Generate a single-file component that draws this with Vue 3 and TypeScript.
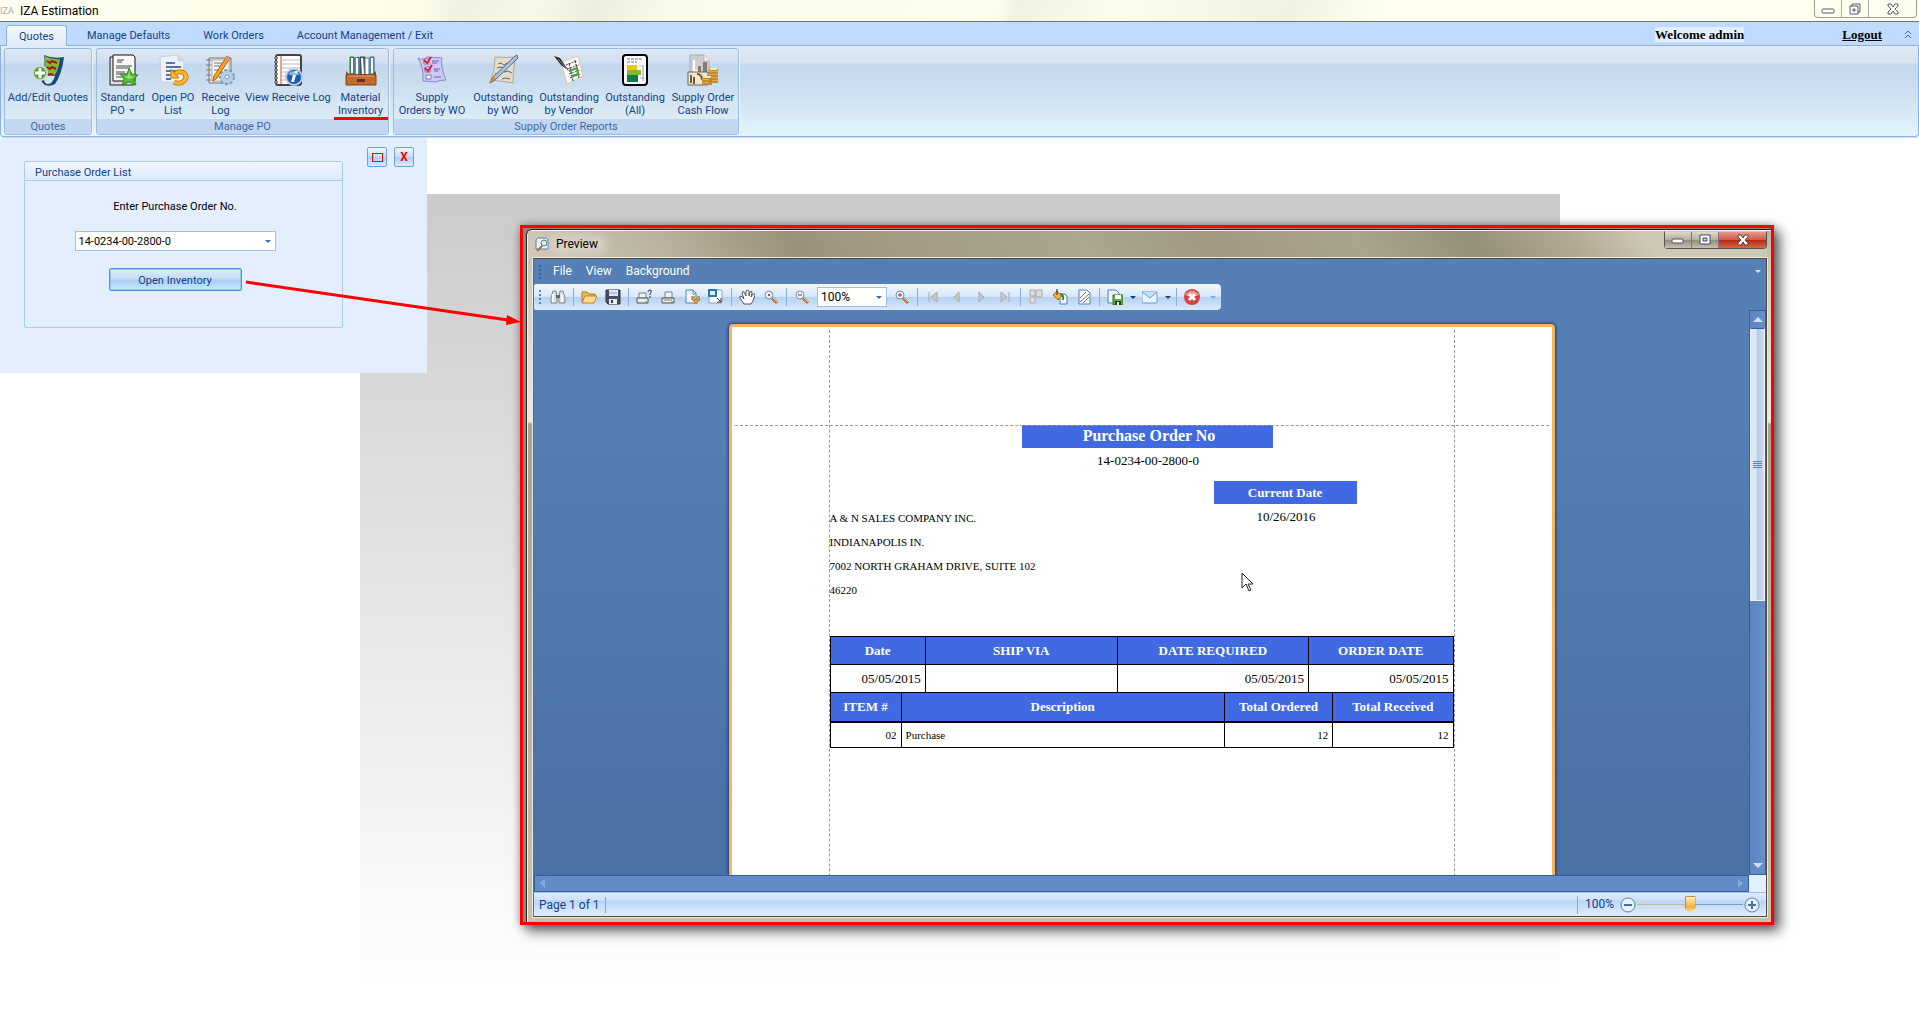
<script setup lang="ts">
import { ref } from 'vue'

interface RibbonItem {
  label: string[]
  icon: string
  width: number
  menu?: boolean
  marked?: boolean
}

interface RibbonGroup {
  title: string
  items: RibbonItem[]
}

interface Tool {
  kind: 'button' | 'sep' | 'zoom' | 'drop'
  name?: string
}

const ribbonIcons: Record<string, string> = {
  quotes: `<path d="M12 1q9 4 20 2-2 17-9 27-5 3-10 1-3-2-4-5 5-12 3-25z" fill="#1d4778"/>
    <path d="M13 2q7 4 15 3-1 9-5 16l-11-2q2-9 1-17z" fill="#84b82c"/><path d="M12 20l11 2q-1 4-4 7-3 2-6 0-2-4-1-9z" fill="#cfe6f6"/>
    <path d="M15 7l3 2 2-2 5 2M15 13l3 2 2-2 4 2M15 20l2 1 2-1 2 1" stroke="#a3142a" stroke-width="2" fill="none"/>
    <circle cx="8" cy="19" r="7" fill="#4f9e35" stroke="#cfd8cf" stroke-width="2"/><path d="M8 14v10M3 19h10" stroke="#fff" stroke-width="3"/>`,
  standard: `<path d="M3 3h24v28H3z" fill="#ddd" stroke="#222"/><path d="M6 1h20l2 2v24H6z" fill="#f8f8f8" stroke="#111" stroke-width="1"/>
    <path d="M10 6h7M10 8h5M9 12h16M9 14h14M9 18h9M9 20h12M9 23h8" stroke="#444"/>
    <path d="M22 14l3 6 6 1-4 4 2 6-7-3-7 3 2-6-4-5 7 0z" fill="#56b83b" stroke="#3a8b27"/><path d="M22 17l1 5 5 1-6 2-5-2 4-1z" fill="#92e36a"/>`,
  open: `<path d="M3 3q9-1 17-2l7 6-1 20q-11 2-22 1z" fill="#eef2f8" stroke="#c4cede"/><path d="M20 1l1 6 6 1z" fill="#c8d3e4"/>
    <path d="M9 9h9M9 13h15M9 17h15M9 21h5M9 25h5" stroke="#4d73b8" stroke-width="2"/>
    <path d="M18 20q4-4 9-1 4 4 0 8-5 4-10 1" fill="none" stroke="#cd7b10" stroke-width="5"/><path d="M18 20q4-4 9-1 4 4 0 8-5 4-10 1" fill="none" stroke="#fbb62a" stroke-width="3"/>
    <path d="M14 15v9h8z" fill="#fbb62a" stroke="#cd7b10"/>`,
  receive: `<path d="M4 4h22v25H4z" fill="#e1e1df" stroke="#777"/><path d="M7 6h17v21H7z" fill="#f7f7f4" stroke="#aaa"/>
    <path d="M1 6h5M1 11h5M1 16h5M1 21h5M1 26h5M9 9h8M9 12h10M9 16h7" stroke="#777"/>
    <circle cx="22" cy="23" r="7" fill="#b9cee5" stroke="#7999bd" stroke-width="2" stroke-dasharray="3 2"/><circle cx="22" cy="23" r="2" fill="#edf5fc" stroke="#7999bd"/>
    <path d="M22 2l3 2-13 20-4 3 1-5z" fill="#f7a51e" stroke="#a85c0b"/><path d="M22 2l3 2-2 3-3-2z" fill="#e99191"/>`,
  view: `<rect x="4" y="1" width="25" height="30" rx="2" fill="#fff" stroke="#444" stroke-width="2"/><path d="M9 6h19M9 10h19M9 14h19M9 18h19M9 22h12M9 26h9" stroke="#bbb"/>
    <path d="M9 2v28" stroke="#e7a386" stroke-width="2"/><path d="M2 4h4M2 8h4M2 12h4M2 16h4M2 20h4M2 24h4M2 28h4" stroke="#888" stroke-width="2"/>
    <circle cx="22" cy="23" r="8" fill="#175eb6" stroke="#b8c9df" stroke-width="2"/><path d="M16 20q6-6 12 0-6 3-12 0z" fill="#83baf0"/><path d="M23 17h3l-1 2h-3zM21 21h3l-2 7h-3z" fill="#fff"/>`,
  material: `<path d="M5 3h4v18H5z" fill="#41a25d" stroke="#28703b"/><path d="M10 4l4-1v19h-4z" fill="#7ab5e2" stroke="#406784"/>
    <path d="M15 3h5v19h-5z" fill="#596066" stroke="#3e454a"/><path d="M20 4h4v18h-4z" fill="#e9f1f5" stroke="#667f91"/><path d="M25 3h4v19h-4z" fill="#6ca8cd" stroke="#395f7c"/>
    <path d="M7 4v15M12 4v16M17 4l1 16M22 5v15M27 4v15" stroke="#fff" stroke-width="2"/>
    <path d="M1 17l3 3h24l3-3v5H1z" fill="#8f491c"/><path d="M1 21h30v10H1z" fill="#bf6a2e" stroke="#87451b"/><path d="M3 22h26" stroke="#eba36c"/><path d="M12 25h8v3h-8z" fill="#702c14"/>`,
  supply: `<path d="M2 4q5 3 9-1l15 1q-2 8 4 22-7 0-10 2L7 27Q8 14 2 4z" fill="#cdc9f6" stroke="#8f87cc"/>
    <path d="M8 5h5v5H8zM9 13h5v5H9zM10 21h5v4h-5z" fill="#fff" stroke="#77a"/><path d="M8 6l3 3 4-6M9 14l3 3 4-6" stroke="#e41c2a" stroke-width="2" fill="none"/>
    <path d="M16 7h7M16 9h5M18 15h6M18 17h4M18 23h7" stroke="#6861aa"/>`,
  outstanding: `<path d="M8 3q12 1 21 0-3 10-3 26-12-2-22-3Q8 15 8 3z" fill="#e4ddcd" stroke="#b3a994"/>
    <path d="M11 10l3-1 3 2 3-2M10 14l4-1 3 1M17 18l4-1 4 2M8 20l4-1M15 25l3-1 5 1" stroke="#6a6157" fill="none"/>
    <path d="M27 3l3-2 1 3L8 26l-5 3 2-5z" fill="#a9c3dd" stroke="#4b6a8c"/><path d="M6 22l3 3-7 4z" fill="#db8d23"/>`,
  vendor: `<path d="M8 8l17-6 5 20-16 8z" fill="#faf9f5" stroke="#cfcabf"/><path d="M13 11l11-4M14 15l12-4M16 20l11-4M17 24l11-4" stroke="#555" stroke-dasharray="2 1"/>
    <path d="M16 9l4 18M22 6l4 18" stroke="#333" stroke-dasharray="3 1"/><path d="M16 17l8-3 1 6-6 2" stroke="#49a13b" stroke-width="2" fill="none"/>
    <path d="M1 2l6 2 9 13-8-6z" fill="#222"/><path d="M5 5l9 10" stroke="#999"/>`,
  all: `<rect x="4" y="1" width="24" height="30" rx="3" fill="#fff" stroke="#000" stroke-width="2"/><path d="M8 5h16M8 8h10" stroke="#777" stroke-dasharray="3 1"/>
    <path d="M8 11h10v5H8z" fill="#e9c70d"/><path d="M8 16h14v5H8z" fill="#80bd33"/><path d="M8 21h11v7H8z" fill="#117a3c"/><path d="M24 11v16" stroke="#999"/><path d="M20 12h5M21 24h5" stroke="#bbb"/>`,
  cash: `<path d="M3 1h14l5 5v19H3z" fill="#cecece" stroke="#aaa"/><path d="M17 1v6h6" fill="#f2f2f2" stroke="#bbb"/><path d="M7 6v11h5" stroke="#fff" stroke-width="2" fill="none"/><path d="M11 12h3v6h-3zM16 8h4v10h-4z" fill="#897970"/>
    <path d="M1 18h20v13H1z" fill="#eee6cd" stroke="#6c6457"/><path d="M4 21v8M7 23v7M10 20q5 0 5 6" stroke="#6f5a3b" stroke-width="2" fill="none"/>
    <path d="M15 23h10v8H15zM22 15h9v14h-9z" fill="#e4a94c"/><path d="M15 24h10M15 27h10M15 30h10M22 16h9M22 19h9M22 22h9M22 25h9M22 28h9" stroke="#a76a19"/><path d="M23 15h7M16 23h8" stroke="#ffe9a5" stroke-width="2"/>`,
}

const lens = (mark: string) =>
  `<path d="M9 9l5 5" stroke="#b07a32" stroke-width="3"/><path d="M10 9l4 4" stroke="#f3c880"/><circle cx="6" cy="6" r="4" fill="#e4f1fc" stroke="#7b90ad" stroke-width="1"/>${mark}`
const printer = `<path d="M5 3h7v6H5z" fill="#eef6ff" stroke="#69829e"/><path d="M2 9h12v5H2z" fill="#e9e9e9" stroke="#555"/><path d="M4 11h8" stroke="#888"/><path d="M11 13h2" stroke="#48a838"/>`

const toolIcons: Record<string, string> = {
  find: `<path d="M3 2h3l1 5v7H1V9zM10 2h3l2 7v5H9V7z" fill="#d9dcdf" stroke="#858b92"/><path d="M6 6h4v3H6z" fill="#5e6770"/><path d="M3 5v8M12 5v8" stroke="#fff" stroke-width="2"/>`,
  open: `<path d="M1 13V3h5l2 2h6v4" fill="#edb65c" stroke="#b87324"/><path d="M1 14l3-7h12l-3 7z" fill="#ffdc93" stroke="#c57f2b"/>`,
  save: `<path d="M1 1h14v14H3l-2-2z" fill="#435064" stroke="#283343"/><path d="M4 1h9v6H4z" fill="#dce5ef"/><path d="M4 10h8v5H4z" fill="#eceff2"/><path d="M6 11h2v3H6z" fill="#344153"/><path d="M4 4h8" stroke="#91a2b6"/>`,
  printAsk: `<path d="M3 4h7v5H3z" fill="#eef6ff" stroke="#69829e"/><path d="M1 9h11v5H1z" fill="#e9e9e9" stroke="#555"/><path d="M9 13h2" stroke="#48a838"/><path d="M12 3q0-2 2-2t1 2-1 2v1M14 7v2" fill="none" stroke="#333"/>`,
  print: printer,
  setup: `<path d="M2 1h7l3 3v10H2z" fill="#edf6ff" stroke="#4f82bb"/><path d="M9 1v4h3" fill="none" stroke="#4f82bb"/><path d="M9 7v3l3 2 3-2V7M12 11v4" stroke="#a66510" stroke-width="3" fill="none"/><path d="M9 7v3l3 2 3-2V7M12 11v4" stroke="#ffc65b" fill="none"/>`,
  scale: `<path d="M6 1h8v13H1V7" fill="#fafdff" stroke="#84a5c8"/><path d="M1 1h7v6H1z" fill="#dceeff" stroke="#2d75b8" stroke-width="2"/><path d="M9 9l4 4M13 9v4H9" stroke="#333" fill="none"/>`,
  hand: `<path d="M5 15l-4-6q-1-2 1-2l3 3-2-6q0-2 2-1l2 4V2q2-2 3 0v5l1-4q2-2 2 1l-1 4 2-3q2-1 2 1l-2 6-2 3z" fill="#fff" stroke="#555"/>`,
  magnify: lens('<path d="M5 5h2v2H5z" fill="#c9432e"/>'),
  out: lens('<path d="M4 6h4" stroke="#bd302a"/>'),
  in: lens('<path d="M4 6h4M6 4v4" stroke="#bd302a"/>'),
  first: `<path d="M4 3v10M12 3v10L6 8z" fill="#c8c8c8" stroke="#aaa"/>`,
  prev: `<path d="M10 3v10L5 8z" fill="#c8c8c8" stroke="#aaa"/>`,
  next: `<path d="M6 3v10l5-5z" fill="#c8c8c8" stroke="#aaa"/>`,
  last: `<path d="M12 3v10M4 3v10l6-5z" fill="#c8c8c8" stroke="#aaa"/>`,
  multi: `<path d="M2 1h5v6H2zM8 1h6v7H8zM2 8h5v6H2z" fill="#ddd" stroke="#aaa"/>`,
  fill: `<path d="M9 5h4l2 2v8H8V7z" fill="#eaf5ff" stroke="#4a7ebb"/><path d="M1 6l4-4 5 5-4 4z" fill="#f4b03c" stroke="#a76a13"/><path d="M5 0v6" stroke="#222"/><path d="M8 5q4 0 3 6" stroke="#3b8a35" stroke-width="2" fill="none"/>`,
  mark: `<path d="M3 1h8l3 3v11H3z" fill="#fafafa" stroke="#4e83bc"/><path d="M4 9l6-6M4 13l9-8M7 14l6-6" stroke="#777" stroke-width="1"/>`,
  export: `<path d="M1 1h8l3 3v10H1z" fill="#edf6ff" stroke="#4f82bb"/><path d="M6 6h10v10H6z" fill="#62b532" stroke="#2f701f"/><path d="M8 6h6v4H8z" fill="#fff"/><path d="M8 12h6v4H8z" fill="#333"/><path d="M10 13h2v3h-2z" fill="#eee"/>`,
  mail: `<path d="M0 3h15v11H0z" fill="#e8f4ff" stroke="#6b9dcd"/><path d="M0 3l8 6 7-6" fill="#c3dff7" stroke="#6b9dcd"/>`,
  close: `<circle cx="8" cy="8" r="8" fill="#d64240"/><path d="M1 6q7-9 14 0-7 3-14 0z" fill="#ee9490"/><path d="M5 5l6 6M11 5l-6 6" stroke="#fff" stroke-width="3"/>`,
}

const tabs = ['Quotes', 'Manage Defaults', 'Work Orders', 'Account Management / Exit']
const activeTab = ref('Quotes')

const groups: RibbonGroup[] = [
  { title: 'Quotes', items: [{ label: ['Add/Edit Quotes'], icon: 'quotes', width: 86 }] },
  {
    title: 'Manage PO',
    items: [
      { label: ['Standard', 'PO'], icon: 'standard', width: 51, menu: true },
      { label: ['Open PO', 'List'], icon: 'open', width: 50 },
      { label: ['Receive', 'Log'], icon: 'receive', width: 45 },
      { label: ['View Receive Log'], icon: 'view', width: 90 },
      { label: ['Material', 'Inventory'], icon: 'material', width: 55, marked: true },
    ],
  },
  {
    title: 'Supply Order Reports',
    items: [
      { label: ['Supply', 'Orders by WO'], icon: 'supply', width: 76 },
      { label: ['Outstanding', 'by WO'], icon: 'outstanding', width: 66 },
      { label: ['Outstanding', 'by Vendor'], icon: 'vendor', width: 66 },
      { label: ['Outstanding', '(All)'], icon: 'all', width: 66 },
      { label: ['Supply Order', 'Cash Flow'], icon: 'cash', width: 70 },
    ],
  },
]

const b = (name: string): Tool => ({ kind: 'button', name })
const sep: Tool = { kind: 'sep' }
const drop: Tool = { kind: 'drop' }
const tools: Tool[] = [
  b('find'), sep, b('open'), b('save'), sep, b('printAsk'), b('print'), b('setup'), b('scale'), sep,
  b('hand'), b('magnify'), sep, b('out'), { kind: 'zoom' }, b('in'), sep,
  b('first'), b('prev'), b('next'), b('last'), sep, b('multi'), b('fill'), b('mark'), sep,
  b('export'), drop, b('mail'), drop, sep, b('close'),
]

const orderNo = ref('14-0234-00-2800-0')
const zoom = ref(100)
const address = ['A & N SALES COMPANY INC.', 'INDIANAPOLIS IN.', '7002 NORTH GRAHAM DRIVE, SUITE 102', '46220']
</script>

<template>
  <div class="app">
    <header class="titlebar">
      <span class="logo">IZA</span>
      <span class="app-title">IZA Estimation</span>
      <div class="win-buttons">
        <button aria-label="Minimize"><svg width="14" height="12"><rect x="1" y="6" width="12" height="4" rx="1" fill="#fff" stroke="#555a66" /></svg></button>
        <button aria-label="Restore"><svg width="14" height="12"><path d="M4 1h8v8H4z" fill="#fff" stroke="#555a66" /><path d="M2 3h8v8H2z" fill="#fff" stroke="#555a66" /><path d="M5 6h2v2H5z" fill="none" stroke="#555a66" /></svg></button>
        <button class="wide" aria-label="Close"><svg width="14" height="12"><path d="M2 1h3l2 3 2-3h3v2L9 6l3 3v2H9L7 8l-2 3H2V9l3-3-3-3z" fill="#fff" stroke="#555a66" /></svg></button>
      </div>
    </header>

    <nav class="tabs">
      <button v-for="t in tabs" :key="t" class="tab" :class="{ active: t === activeTab }" @click="activeTab = t">{{ t }}</button>
      <div class="account">
        <span class="welcome">Welcome admin</span>
        <a href="#" class="logout">Logout</a>
        <svg width="9" height="9"><path d="M1 4l3-3 3 3M1 8l3-3 3 3" fill="none" stroke="#3d6fb4" /></svg>
      </div>
    </nav>

    <section class="ribbon">
      <div v-for="g in groups" :key="g.title" class="group">
        <div class="group-items">
          <button v-for="i in g.items" :key="i.icon" class="item" :style="{ width: i.width + 'px' }">
            <svg width="32" height="32" v-html="ribbonIcons[i.icon]"></svg>
            <span v-for="(line, n) in i.label" :key="line" class="item-line">{{ line }}<i v-if="i.menu && n === 1" class="caret"></i></span>
            <span v-if="i.marked" class="mark"></span>
          </button>
        </div>
        <div class="group-title">{{ g.title }}</div>
      </div>
    </section>

    <main class="workspace">
      <div class="backdrop"></div>

      <section class="order-panel">
        <div class="order-box">
          <h2>Purchase Order List</h2>
          <form class="order-form" @submit.prevent>
            <label for="po">Enter Purchase Order No.</label>
            <div class="combo">
              <select id="po" v-model="orderNo"><option>14-0234-00-2800-0</option></select>
              <i class="caret"></i>
            </div>
            <button class="open-btn">Open Inventory</button>
          </form>
        </div>
        <div class="panel-buttons">
          <button aria-label="Maximize panel"><span class="square"></span></button>
          <button aria-label="Close panel">X</button>
        </div>
      </section>
    </main>

    <section class="preview">
      <div class="frame">
        <header class="preview-title">
          <svg width="14" height="15"><path d="M3 1h8l2 2v9H1V3z" fill="#eff7ff" stroke="#4b80b6" /><circle cx="9" cy="6" r="3" fill="#dceafa" stroke="#596b80" /><path d="M7 9l-5 5" stroke="#b4712b" stroke-width="2" /></svg>
          <span>Preview</span>
          <div class="preview-buttons">
            <button aria-label="Minimize preview"><svg width="14" height="12"><rect x="1" y="5" width="11" height="4" rx="1" fill="#fff" stroke="#484c5a" /></svg></button>
            <button aria-label="Maximize preview"><svg width="14" height="12"><path d="M2 1h10v9H2z" fill="#fff" stroke="#484c5a" /><path d="M5 4h4v3H5z" fill="#ccc" stroke="#484c5a" /></svg></button>
            <button class="red" aria-label="Close preview"><svg width="14" height="12"><path d="M2 1h3l2 3 2-3h3v2L9 6l3 3v2H9L7 8l-2 3H2V9l3-3-3-3z" fill="#fff" stroke="#5b3a44" /></svg></button>
          </div>
        </header>

        <div class="client">
          <nav class="menubar">
            <i class="grip"></i>
            <button>File</button>
            <button>View</button>
            <button>Background</button>
            <i class="caret pale"></i>
          </nav>
          <div class="toolbar">
            <i class="grip"></i>
            <template v-for="(t, n) in tools" :key="n">
              <button v-if="t.kind === 'button'" class="tool" :aria-label="t.name"><svg width="16" height="16" v-html="toolIcons[t.name as string]"></svg></button>
              <i v-else-if="t.kind === 'sep'" class="sep"></i>
              <button v-else-if="t.kind === 'drop'" class="drop" aria-label="More"><i class="caret"></i></button>
              <div v-else class="combo zoom-combo">
                <select v-model="zoom" aria-label="Zoom"><option :value="100">100%</option></select>
                <i class="caret"></i>
              </div>
            </template>
            <button class="drop last" aria-label="Toolbar options"><i class="caret"></i></button>
          </div>

          <div class="viewer">
            <div class="canvas">
              <article class="sheet">
                <i class="guide left"></i>
                <i class="guide right"></i>
                <h1>Purchase Order No</h1>
                <i class="guide top"></i>
                <p class="number">14-0234-00-2800-0</p>
                <h2>Current Date</h2>
                <div class="row">
                  <address><span v-for="a in address" :key="a">{{ a }}</span></address>
                  <p class="date">10/26/2016</p>
                </div>
                <table>
                  <colgroup><col style="width: 15.3%" /><col style="width: 30.8%" /><col style="width: 30.7%" /><col style="width: 23.2%" /></colgroup>
                  <thead><tr><th>Date</th><th>SHIP VIA</th><th>DATE REQUIRED</th><th>ORDER DATE</th></tr></thead>
                  <tbody><tr><td>05/05/2015</td><td></td><td>05/05/2015</td><td>05/05/2015</td></tr></tbody>
                </table>
                <table class="lines">
                  <colgroup><col style="width: 11.4%" /><col style="width: 51.9%" /><col style="width: 17.4%" /><col style="width: 19.3%" /></colgroup>
                  <thead><tr><th>ITEM #</th><th>Description</th><th>Total Ordered</th><th>Total Received</th></tr></thead>
                  <tbody><tr><td>02</td><td class="text">Purchase</td><td>12</td><td>12</td></tr></tbody>
                </table>
                <svg class="cursor" width="13" height="20"><path d="M1 1v15l4-4 3 7 2-1-3-6h5z" fill="#fff" stroke="#222" /></svg>
              </article>
            </div>
            <div class="vscroll">
              <button aria-label="Scroll up"><svg width="10" height="5"><path d="M0 5l5-5 5 5z" fill="#cfe0f5" /></svg></button>
              <div class="thumb"><i></i></div>
              <button class="down" aria-label="Scroll down"><svg width="10" height="5"><path d="M0 0l5 5 5-5z" fill="#cfe0f5" /></svg></button>
            </div>
          </div>
          <div class="hrow">
            <div class="hscroll">
              <svg width="5" height="9"><path d="M5 0v9L0 4z" fill="#86abdc" /></svg>
              <svg width="5" height="9"><path d="M0 0l5 4-5 5z" fill="#86abdc" /></svg>
            </div>
            <div class="corner"></div>
          </div>
          <footer class="status">
            <span class="pages">Page 1 of 1</span>
            <div class="zoomer">
              <span>100%</span>
              <button aria-label="Zoom out"><svg width="16" height="16"><circle cx="8" cy="8" r="7" fill="#e8f2ff" stroke="#587fb2" /><path d="M4 8h8" stroke="#4d6f9f" stroke-width="2" /></svg></button>
              <input v-model.number="zoom" type="range" min="0" max="200" aria-label="Zoom level" />
              <button aria-label="Zoom in"><svg width="16" height="16"><circle cx="8" cy="8" r="7" fill="#e8f2ff" stroke="#587fb2" /><path d="M4 8h8M8 4v8" stroke="#4d6f9f" stroke-width="2" /></svg></button>
            </div>
          </footer>
        </div>
      </div>
    </section>

    <svg class="arrow" width="276" height="46"><path d="M1 2l262 38" stroke="#f00" stroke-width="3" /><path d="M262 35l14 7-15 3z" fill="#f00" /></svg>
  </div>
</template>

<style>
body { margin: 0; background: #fff; }
</style>

<style scoped>
* { box-sizing: border-box; }
.app { position: relative; display: flex; flex-direction: column; min-height: 100vh; overflow: hidden; font: 11px/13px Tahoma, Roboto, sans-serif; color: #15428b; }
button { margin: 0; padding: 0; border: 0; background: none; font: inherit; color: inherit; display: flex; align-items: center; justify-content: center; }
h1, h2, p { margin: 0; font-weight: normal; }
svg { display: block; flex: none; }
.caret { display: inline-block; width: 0; height: 0; border: 3px solid transparent; border-top-color: #3f6dab; border-bottom: 0; }

.titlebar { display: flex; align-items: center; height: 22px; padding-right: 2px; border-bottom: 1px solid #70746c; background: linear-gradient(110deg, #fffff2 0 3%, #fdfde9 12%, #fcfce9 22%, #f1f1df 24%, #f8f8e6 28%, #eeeedc 31%, #fafae8 35%, #fdfdeb 52%, #f2f2e0 53%, #fcfcea 58%, #f2f2e0 67%, #fffff0 72%); }
.logo { width: 20px; padding-top: 2px; color: #aaa; font-size: 9px; }
.app-title { padding-top: 2px; color: #000; font-size: 12px; }
.win-buttons { display: flex; align-self: flex-start; margin-left: auto; height: 18px; border: 1px solid #9c9c94; border-top: 0; border-radius: 0 0 4px 4px; }
.win-buttons button { width: 27px; border-right: 1px solid #aaa; }
.win-buttons .wide { width: 47px; border: 0; }

.tabs { display: flex; align-items: flex-end; gap: 7px; height: 24px; padding-left: 6px; background: #bfdbff; border-bottom: 1px solid #8db2e3; }
.tab { height: 20px; padding: 0 13px; white-space: nowrap; }
.tab.active { height: 21px; margin-bottom: -1px; padding: 0 12px; border: 1px solid #8db2e3; border-bottom: 0; border-radius: 3px 3px 0 0; background: linear-gradient(#f4f9ff, #dfebf8); }
.account { display: flex; align-items: center; height: 100%; margin-left: auto; padding: 2px 6px 0 0; font: bold 13px/15px "Liberation Serif", serif; color: #000; }
.welcome { background: #e3efff; }
.logout { margin: 0 22px 0 98px; color: #000; }

.ribbon { display: flex; gap: 4px; height: 91px; margin-bottom: 1px; padding: 2px 3px; border: 1px solid #8db2e3; border-top: 0; border-radius: 0 0 4px 4px; background: linear-gradient(#e1ebf5 0, #d5e2f0 17px, #c5d8ed 18px, #cfe0f1 50px, #e3f5fc 90px); box-shadow: 0 1px #c9dcf2; }
.group { display: flex; flex-direction: column; height: 87px; border: 1px solid #9bbbe0; border-radius: 3px; background: linear-gradient(#dde8f4 0, #d0dff0 14px, #c2d6ed 15px, #dcecf6 70px); box-shadow: 1px 1px #eef6fd; }
.group-items { display: flex; flex: 1; }
.item { position: relative; flex-direction: column; justify-content: flex-start; padding-top: 5px; white-space: nowrap; }
.item svg { margin-bottom: 5px; }
.item-line .caret { margin: 0 0 2px 4px; }
.mark { position: absolute; left: 1px; right: 0; bottom: -1px; height: 3px; background: #f00; z-index: 1; }
.group-title { height: 15px; line-height: 15px; text-align: center; color: #3e6aaa; background: #c1d8f0; }

.workspace { flex: 1; }
.backdrop { position: absolute; left: 360px; right: 359px; top: 194px; bottom: 0; background: linear-gradient(#cbcbcb, #fff 97%); }
.order-panel { position: relative; display: flex; justify-content: space-between; width: 427px; height: 235px; padding: 9px 13px 0 24px; background: #e3efff; }
.order-box { width: 319px; height: 167px; margin-top: 14px; border: 1px solid #a9ccf3; border-radius: 2px; }
.order-box h2 { height: 19px; padding-left: 10px; font-size: 11px; line-height: 21px; border-bottom: 1px solid #a9ccf3; background: linear-gradient(#f0f6ff, #dceafd); }
.order-form { display: flex; flex-direction: column; align-items: center; padding: 19px 17px 0 0; }
.order-form label { margin-bottom: 18px; color: #000; }
.combo { display: flex; align-items: center; position: relative; width: 201px; height: 20px; border: 1px solid #a3bfe3; background: #fff; }
.combo select { width: 100%; height: 100%; padding: 0 3px; border: 0; appearance: none; background: none; font: inherit; color: #000; }
.combo .caret { position: absolute; right: 4px; pointer-events: none; }
.open-btn { width: 133px; height: 23px; margin-top: 17px; padding-top: 1px; border: 1px solid #5292dc; border-radius: 2px; background: linear-gradient(#dcebfa 0, #c5dcf4 48%, #a8cdf2 52%, #c3ecfe 100%); box-shadow: inset 0 0 0 1px #96c7f0; }
.panel-buttons { display: flex; gap: 7px; }
.panel-buttons button { width: 20px; height: 20px; border: 1px solid #6ba1e0; border-radius: 2px; color: #f00; font: bold 12px/14px Roboto, sans-serif; background: linear-gradient(#eef6ff, #c6dcf5 50%, #add0f4 52%, #d8ecff); }
.square { width: 11px; height: 9px; border: 1px solid #f00; }

.arrow { position: absolute; left: 245px; top: 280px; }
.preview { position: absolute; left: 520px; right: 145px; top: 225px; bottom: 93px; padding: 1px 0 0 3px; border: 3px solid #f00; background: #888; box-shadow: 6px 6px 12px rgba(0, 0, 0, 0.6), 0 0 8px rgba(0, 0, 0, 0.3); }
.frame { display: flex; flex-direction: column; height: 100%; padding: 0 4px 5px 6px; border: 1px solid #222; border-width: 1px 0 0 1px; border-radius: 6px 0 0 0; box-shadow: inset 1px 1px #f4f2ec; background: linear-gradient(#b9b29c 0, #d1cab7 40px, #eeeae3 192px, #a9a38c 194px, #c9c0a7 100%); }
.preview-title { display: flex; gap: 5px; align-items: center; height: 27px; margin: 1px 0 0 -5px; padding-left: 7px; color: #000; font-size: 12px; background: linear-gradient(55deg, #d1cab9 0, #b9b19e 12%, #a8a089 17%, #9a927a 22%, #a39b83 30%, #aca68f 45%, #a19981 55%, #aba48d 67%, #979078 76%, #b2aa94 84%, #cfc8b6 90%); }
.preview-title > span { padding: 0 6px 0 2px; border-radius: 8px; background: rgba(235, 231, 222, 0.4); box-shadow: 0 0 8px 4px rgba(235, 231, 222, 0.4); }
.preview-buttons { display: flex; align-self: flex-start; height: 18px; margin-left: auto; border: 1px solid #555; border-top-color: #ccc; border-radius: 0 0 4px 4px; }
.preview-buttons button { width: 27px; border-right: 1px solid #777; background: linear-gradient(#ded8ca, #b4ac99 50%, #958d7a 52%, #c8c0af); }
.preview-buttons .red { width: 47px; border: 0; border-radius: 0 0 3px; background: linear-gradient(#e69b8c, #cf5b49 48%, #b62a19 52%, #d66b3c); }
.client { display: flex; flex-direction: column; flex: 1; min-height: 0; border: 1px solid #4d4b42; border-left-color: #6b6963; box-shadow: 0 0 0 1px #ece9e0; background: #557fb5; }
.menubar { display: flex; align-items: center; height: 25px; padding-right: 5px; color: #fff; font-size: 12px; }
.menubar button { height: 25px; padding: 0 7px; }
.grip { width: 2px; height: 14px; margin: 0 5px; background: repeating-linear-gradient(#2f5791 0 2px, transparent 2px 4px); opacity: 0.7; }
.pale { margin-left: auto; border-top-color: #d7e5f7; }
.toolbar { display: flex; align-items: center; align-self: flex-start; height: 26px; border-radius: 2px 4px 4px 2px; background: linear-gradient(#f3f7fc 0, #d7e7fa 48%, #b5d1f4 52%, #dbeafb 100%); }
.tool { width: 24px; height: 24px; }
.sep { width: 1px; height: 18px; margin: 0 3px; background: #8caeda; }
.drop { width: 11px; height: 24px; }
.drop .caret { border-top-color: #173f83; }
.drop.last { width: 17px; }
.drop.last .caret { border-top-color: #82aad9; }
.zoom-combo { width: 70px; margin: 0 3px; font-size: 12px; }
.viewer { display: flex; flex: 1; min-height: 0; background: linear-gradient(#557fb5 20%, #4a72a5 90%); }
.canvas { display: flex; flex: 1; justify-content: center; padding-top: 14px; overflow: hidden; }
.sheet { position: relative; width: 826px; height: 700px; padding: 98px 98px 0; border: 3px solid #f4b562; border-radius: 4px; background: #fff; box-shadow: 0 0 3px 1px #183b72; color: #000; font: 13px/24px "Liberation Serif", serif; }
.guide { position: absolute; border: 0 dashed #999; }
.guide.left { left: 97px; top: 3px; bottom: 0; border-left-width: 1px; }
.guide.right { right: 97px; top: 3px; bottom: 0; border-left-width: 1px; }
.guide.top { left: 3px; right: 3px; top: 98px; border-top-width: 1px; }
.sheet h1 { width: 251px; height: 23px; margin: 0 0 1px 192px; padding-left: 4px; font-weight: bold; font-size: 16px; line-height: 22px; text-align: center; color: #fff; background: #4169e1; }
.number { width: 253px; margin-left: 192px; text-align: center; }
.sheet h2 { width: 143px; height: 23px; margin: 8px 0 2px 384px; font-weight: bold; font-size: 13px; text-align: center; color: #fff; background: #4169e1; }
.row { display: flex; margin-bottom: 34px; }
address { display: flex; flex-direction: column; width: 384px; font: 11px/24px "Liberation Serif", serif; }
.date { width: 145px; text-align: center; line-height: 22px; }
table { width: 100%; table-layout: fixed; border-collapse: collapse; line-height: 18px; }
th, td { height: 28px; padding: 0 4px; border: 1px solid #000; }
th { background: #4169e1; color: #fff; }
td { text-align: right; }
.lines { margin-top: -1px; }
.lines th { height: 29px; border-bottom-width: 2px; }
.lines td { height: 26px; font-size: 11px; }
.lines .text { text-align: left; }
.cursor { position: absolute; left: 509px; top: 245px; }
.vscroll { display: flex; flex-direction: column; width: 17px; border: 1px solid #34609f; background: linear-gradient(90deg, #5b86c2, #668fcb); }
.vscroll button { height: 17px; }
.vscroll .down { margin-top: auto; }
.thumb { display: flex; align-items: center; justify-content: center; height: 273px; border: 1px solid #e8f1fc; border-top-color: #34609f; background: linear-gradient(90deg, #dce7f4 40%, #b5cbe3 50%, #cfdfef); }
.thumb i { width: 9px; height: 8px; background: repeating-linear-gradient(#5880b7 0 1px, transparent 1px 2px); }
.hrow { display: flex; height: 17px; }
.hscroll { display: flex; align-items: center; justify-content: space-between; flex: 1; padding: 0 5px; border: 1px solid #34609f; background: #628cc8; }
.corner { width: 17px; background: #e3efff; }
.status { display: flex; align-items: center; height: 24px; padding: 0 6px 0 5px; font-size: 12px; background: linear-gradient(#dceafc 0, #cfe2fa 30%, #b9d5f6 34%, #dcebfc 90%); border-top: 1px solid #9dbfe9; }
.pages { height: 16px; padding-right: 5px; line-height: 16px; border-right: 1px solid #84a8d8; }
.zoomer { display: flex; align-items: center; margin-left: auto; padding-left: 7px; border-left: 1px solid #84a8d8; }
.zoomer > span { margin-right: 6px; }
input[type='range'] { width: 106px; height: 18px; margin: 0 1px; appearance: none; background: linear-gradient(90deg, #c9b98c 50%, #7b9fce 50%) center / 100% 1px no-repeat; }
input[type='range']::-webkit-slider-thumb { appearance: none; width: 11px; height: 18px; border: 1px solid #d08a2a; border-radius: 1px; background: linear-gradient(#fff1c8, #f6b13c 60%, #ffe19b); clip-path: polygon(0 0, 100% 0, 100% 70%, 50% 100%, 0 70%); }
</style>
